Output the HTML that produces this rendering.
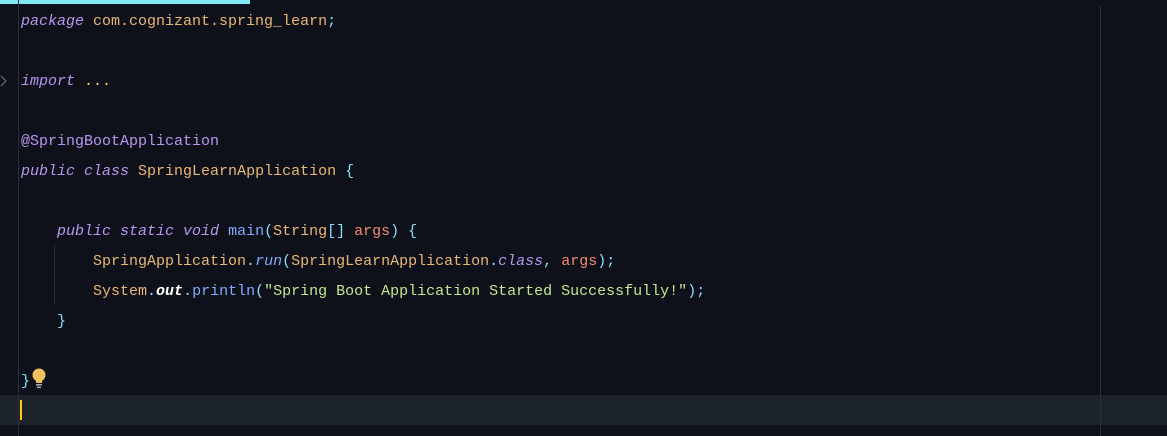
<!DOCTYPE html>
<html><head><style>
body{margin:0;width:1167px;height:436px;background:#0f111a;overflow:hidden;position:relative;font-family:"Liberation Mono",monospace;font-size:15px}
.l{position:absolute;left:21px;white-space:pre;line-height:30px;height:30px;color:#c8ccd8;margin-top:1px}
.k{color:#b896f0;font-style:italic}
.o{color:#eab776}
.c{color:#89ddff}
.a{color:#ef8a70}
.s{color:#c3e88d}
.f{color:#82aaff}
.y{color:#ffcb6b}
</style></head><body>
<div style="position:absolute;left:0;top:0;width:250px;height:4px;background:#7fe9f5"></div>
<div style="position:absolute;left:0;top:395px;width:1167px;height:30px;background:#1d232b"></div>
<div style="position:absolute;left:18px;top:0;width:1px;height:436px;background:#2a2f3e"></div>
<div style="position:absolute;left:1100px;top:6px;width:1px;height:430px;background:#2a2f3e"></div>
<div style="position:absolute;left:54px;top:245px;width:1px;height:60px;background:#2a2f3e"></div>
<div style="position:absolute;left:20px;top:400px;width:2px;height:20px;background:#ffcc00"></div>
<svg style="position:absolute;left:0;top:74px" width="8" height="14"><path d="M1 2 L6 7 L1 12" stroke="#6b7080" fill="none" stroke-width="1.2"/></svg>
<svg style="position:absolute;left:31px;top:367px" width="16" height="22"><circle cx="8" cy="8" r="6.5" fill="#f2c15f"/><rect x="5" y="13" width="6" height="3" fill="#f2c15f"/><rect x="5" y="17" width="6" height="1.5" fill="#aaa"/><rect x="6" y="19.5" width="4" height="1.5" fill="#aaa"/></svg>
<div class="l" style="top:6px"><span class="k">package</span> <span class="o">com.cognizant.spring_learn</span><span class="c">;</span></div>
<div class="l" style="top:66px"><span class="k">import</span> <span class="y">...</span></div>
<div class="l" style="top:126px"><span class="k" style="font-style:normal">@SpringBootApplication</span></div>
<div class="l" style="top:156px"><span class="k">public class</span> <span class="o">SpringLearnApplication</span> <span class="c">{</span></div>
<div class="l" style="top:216px">    <span class="k">public static void</span> <span class="f">main</span><span class="c">(</span><span class="o">String</span><span class="c">[]</span> <span class="a">args</span><span class="c">) {</span></div>
<div class="l" style="top:246px">        <span class="o">SpringApplication</span><span class="c">.</span><span class="f" style="font-style:italic">run</span><span class="c">(</span><span class="o">SpringLearnApplication</span><span class="c">.</span><span class="k">class</span><span class="c">,</span> <span class="a">args</span><span class="c">);</span></div>
<div class="l" style="top:276px">        <span class="o">System</span><span class="c">.</span><span style="color:#fff;font-style:italic;font-weight:bold">out</span><span class="c">.</span><span class="f">println</span><span class="c">(</span><span class="s">"Spring Boot Application Started Successfully!"</span><span class="c">);</span></div>
<div class="l" style="top:306px">    <span class="c">}</span></div>
<div class="l" style="top:366px"><span class="c">}</span></div>
</body></html>
